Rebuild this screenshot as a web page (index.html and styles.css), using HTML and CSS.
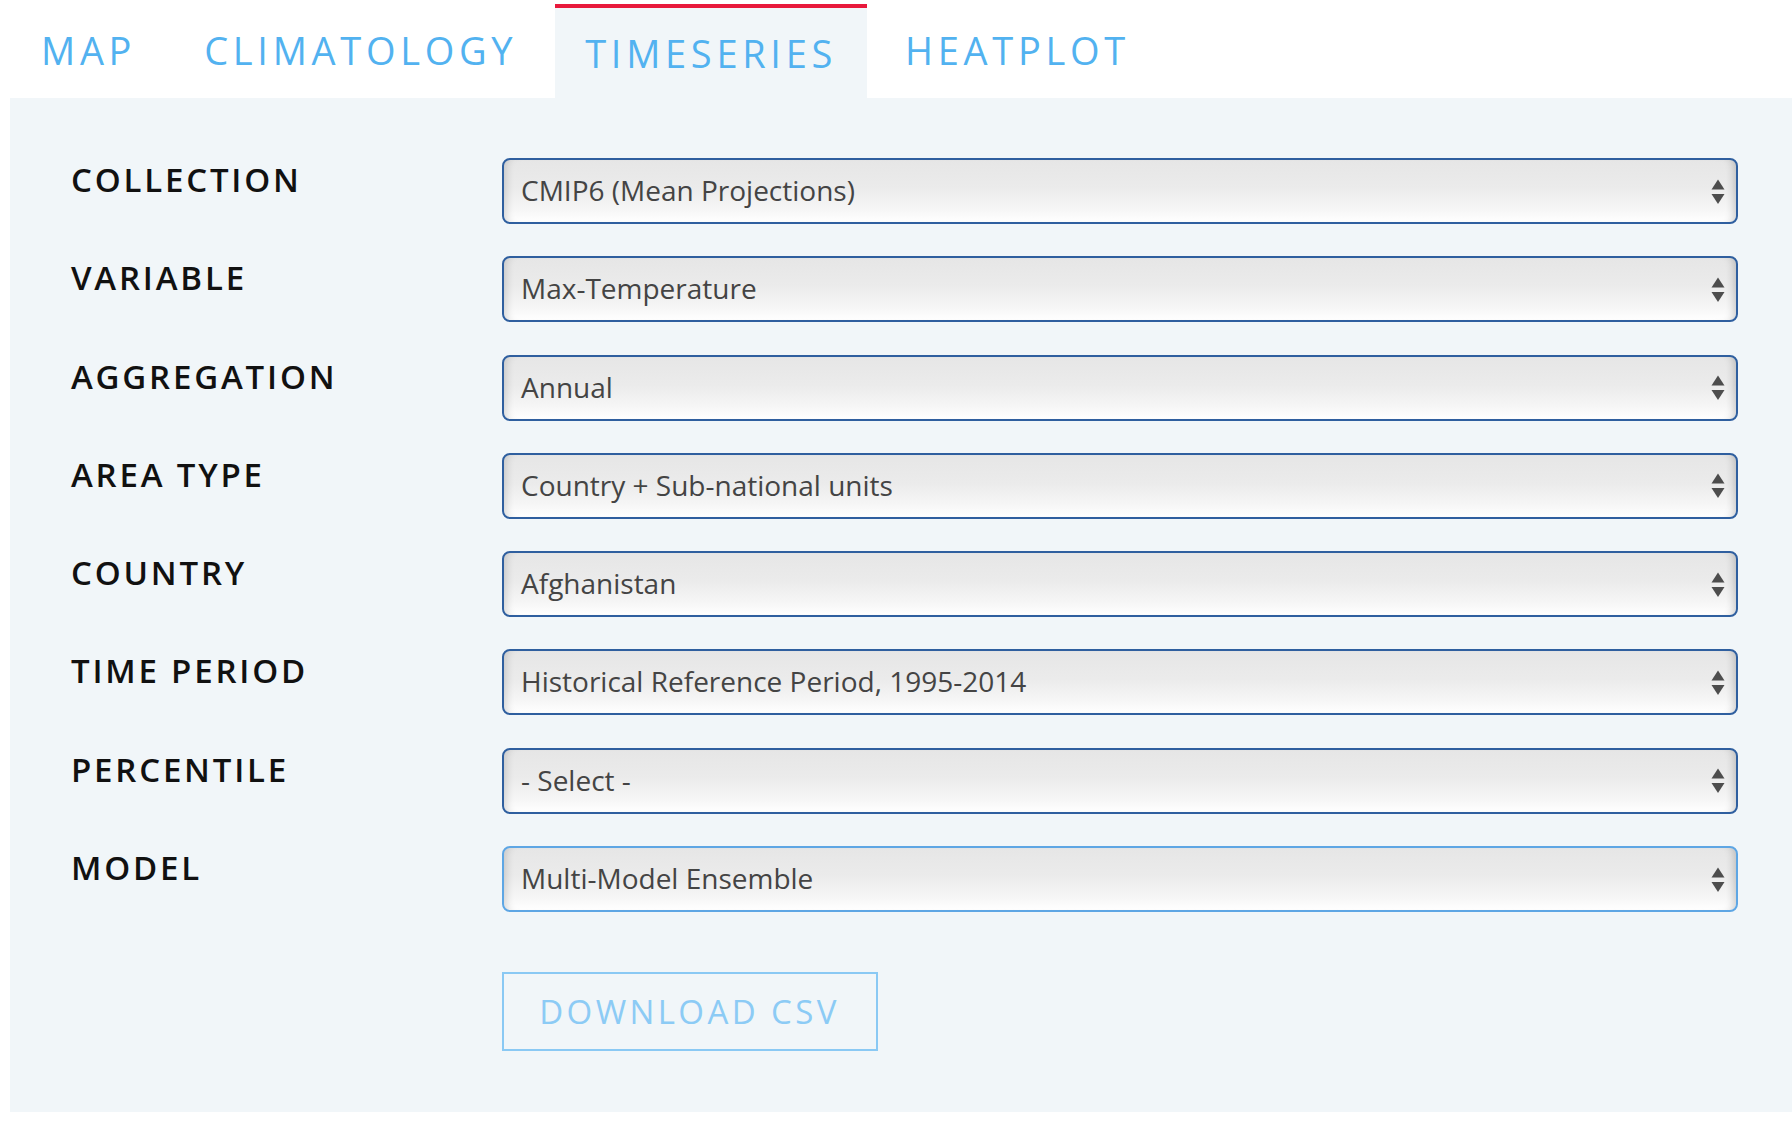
FILE: index.html
```html
<!DOCTYPE html>
<html>
<head>
<meta charset="utf-8">
<title>Timeseries</title>
<link rel="stylesheet" href="styles.css">
</head>
<body>
<nav class="tabs">
  <a class="tab">MAP</a>
  <a class="tab">CLIMATOLOGY</a>
  <a class="tab tab-active">TIMESERIES</a>
  <a class="tab">HEATPLOT</a>
</nav>
<main class="panel">
  <div class="form">
    <div class="row">
      <div class="label">COLLECTION</div>
      <div class="select"><span class="value">CMIP6 (Mean Projections)</span><svg class="arrows" width="14" height="26" viewBox="0 0 14 26"><polygon points="0.5,10.5 7,0.5 13.5,10.5"/><polygon points="0.5,15 13.5,15 7,25"/></svg></div>
    </div>
    <div class="row">
      <div class="label">VARIABLE</div>
      <div class="select"><span class="value">Max-Temperature</span><svg class="arrows" width="14" height="26" viewBox="0 0 14 26"><polygon points="0.5,10.5 7,0.5 13.5,10.5"/><polygon points="0.5,15 13.5,15 7,25"/></svg></div>
    </div>
    <div class="row">
      <div class="label">AGGREGATION</div>
      <div class="select"><span class="value">Annual</span><svg class="arrows" width="14" height="26" viewBox="0 0 14 26"><polygon points="0.5,10.5 7,0.5 13.5,10.5"/><polygon points="0.5,15 13.5,15 7,25"/></svg></div>
    </div>
    <div class="row">
      <div class="label">AREA TYPE</div>
      <div class="select"><span class="value">Country + Sub-national units</span><svg class="arrows" width="14" height="26" viewBox="0 0 14 26"><polygon points="0.5,10.5 7,0.5 13.5,10.5"/><polygon points="0.5,15 13.5,15 7,25"/></svg></div>
    </div>
    <div class="row">
      <div class="label">COUNTRY</div>
      <div class="select"><span class="value">Afghanistan</span><svg class="arrows" width="14" height="26" viewBox="0 0 14 26"><polygon points="0.5,10.5 7,0.5 13.5,10.5"/><polygon points="0.5,15 13.5,15 7,25"/></svg></div>
    </div>
    <div class="row">
      <div class="label">TIME PERIOD</div>
      <div class="select"><span class="value">Historical Reference Period, 1995-2014</span><svg class="arrows" width="14" height="26" viewBox="0 0 14 26"><polygon points="0.5,10.5 7,0.5 13.5,10.5"/><polygon points="0.5,15 13.5,15 7,25"/></svg></div>
    </div>
    <div class="row">
      <div class="label">PERCENTILE</div>
      <div class="select"><span class="value">- Select -</span><svg class="arrows" width="14" height="26" viewBox="0 0 14 26"><polygon points="0.5,10.5 7,0.5 13.5,10.5"/><polygon points="0.5,15 13.5,15 7,25"/></svg></div>
    </div>
    <div class="row">
      <div class="label">MODEL</div>
      <div class="select select-focus"><span class="value">Multi-Model Ensemble</span><svg class="arrows" width="14" height="26" viewBox="0 0 14 26"><polygon points="0.5,10.5 7,0.5 13.5,10.5"/><polygon points="0.5,15 13.5,15 7,25"/></svg></div>
    </div>
    <div class="actions">
      <button class="btn">DOWNLOAD CSV</button>
    </div>
  </div>
</main>
</body>
</html>
```

FILE: styles.css
```css
html, body {
  margin: 0;
  padding: 0;
  background: #ffffff;
}

body {
  font-family: "Open Sans", "Noto Sans", "Liberation Sans", sans-serif;
}

.tabs {
  display: flex;
  align-items: flex-start;
  padding-left: 11px;
  gap: 8px;
  height: 98px;
}

.tab {
  display: block;
  box-sizing: border-box;
  height: 98px;
  padding: 24px 30px 0 30px;
  font-size: 38px;
  line-height: 52px;
  letter-spacing: 4.7px;
  color: #52b2f0;
  text-decoration: none;
  white-space: nowrap;
}

.tab-active {
  margin-top: 4px;
  height: 94px;
  border-top: 4px solid #e8193c;
  padding-top: 18.5px;
  background: #f1f6f9;
}

.panel {
  margin-left: 10px;
  background: #f1f6f9;
  padding: 60px 54px 61px 61px;
}

.form {
  display: flex;
  flex-direction: column;
  gap: 32.3px;
}

.row {
  display: grid;
  grid-template-columns: 431px 1fr;
  align-items: start;
}

.label {
  font-size: 33px;
  line-height: 33px;
  padding-top: 5px;
  font-weight: 600;
  letter-spacing: 2.8px;
  color: #111111;
}

.select {
  box-sizing: border-box;
  height: 66px;
  display: flex;
  align-items: center;
  justify-content: space-between;
  padding: 0 11px 0 17px;
  border: 2px solid #2f5f9f;
  border-radius: 8px;
  background: linear-gradient(#e6e6e6 0%, #ebebeb 45%, #f6f6f6 80%, #ffffff 100%);
  box-shadow: inset 9px 0 8px -7px rgba(0, 0, 0, 0.16), inset -9px 0 8px -7px rgba(0, 0, 0, 0.2);
}

.select-focus {
  border-color: #5ea6e4;
}

.value {
  font-size: 28px;
  color: #444444;
  white-space: nowrap;
  margin-top: -2px;
}

.arrows {
  display: block;
  fill: #4d4d4d;
  margin-top: 1px;
}

.actions {
  margin-top: 27.4px;
  padding-left: 431px;
}

.btn {
  box-sizing: border-box;
  width: 376px;
  height: 79px;
  border: 2px solid #8ac9f4;
  background: transparent;
  font-family: "Open Sans", "Noto Sans", "Liberation Sans", sans-serif;
  font-size: 33px;
  letter-spacing: 3.4px;
  padding: 0 1px 0 0;
  color: #8ccbf5;
  text-align: center;
}
```
